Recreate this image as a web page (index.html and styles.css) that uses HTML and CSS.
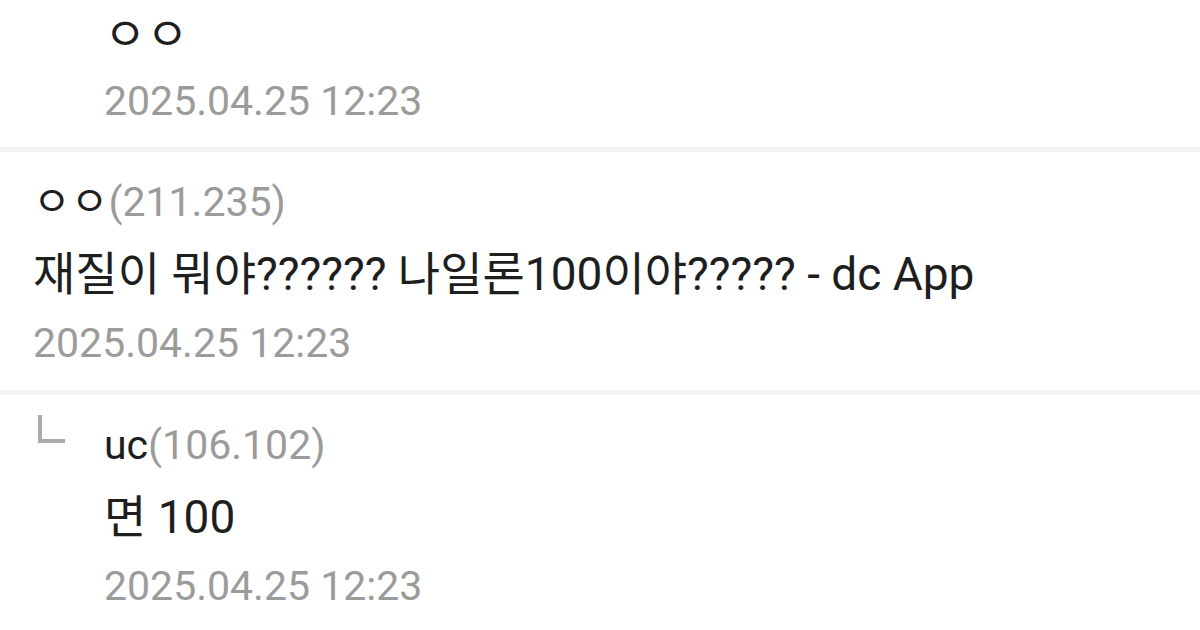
FILE: index.html
```html
<!DOCTYPE html>
<html lang="ko">
<head>
    <meta charset="UTF-8">
    <meta name="viewport" content="width=device-width, initial-scale=1.0">
    <title>댓글</title>
    <link rel="stylesheet" href="styles.css">
</head>
<body>
    <ul class="comments">
        <li class="comment reply first">
            <div class="reply-mark"></div>
            <div class="comment-body">
                <p class="text">ㅇㅇ</p>
                <p class="date">2025.04.25 12:23</p>
            </div>
        </li>

        <li class="comment">
            <div class="comment-body">
                <p class="name">ㅇㅇ<span class="ip">(211.235)</span></p>
                <p class="text">재질이 뭐야?????? 나일론100이야????? - dc App</p>
                <p class="date">2025.04.25 12:23</p>
            </div>
        </li>

        <li class="comment reply">
            <div class="reply-mark"><span></span></div>
            <div class="comment-body">
                <p class="name">uc<span class="ip">(106.102)</span></p>
                <p class="text">면 100</p>
                <p class="date">2025.04.25 12:23</p>
            </div>
        </li>
    </ul>
</body>
</html>
```

FILE: styles.css
```css
* {
    margin: 0;
    padding: 0;
    box-sizing: border-box;
}

body {
    background: #fff;
    font-family: Roboto, "Noto Sans CJK KR", sans-serif;
    font-size: 41px;
    color: #1e1e1e;
}

.comments {
    list-style: none;
}

.comment {
    display: flex;
    padding: 14px 20px 14px 33px;
    border-bottom: 5px solid #f4f4f4;
}

.comment.first {
    padding-top: 0;
    padding-bottom: 13px;
}

.comment.reply {
    padding-left: 38px;
}

.reply-mark {
    width: 66px;
    flex-shrink: 0;
}

.reply-mark span {
    display: block;
    width: 27px;
    height: 28px;
    margin-top: 6px;
    border-left: 4px solid #ababab;
    border-bottom: 4px solid #ababab;
}

.comment-body p {
    line-height: 72px;
    white-space: nowrap;
}

.comment-body .text {
    font-size: 46px;
}

.comment-body .date {
    line-height: 66px;
}

.comment.first .text {
    line-height: 68px;
}

.ip,
.date {
    color: #9b9b9b;
}
```
